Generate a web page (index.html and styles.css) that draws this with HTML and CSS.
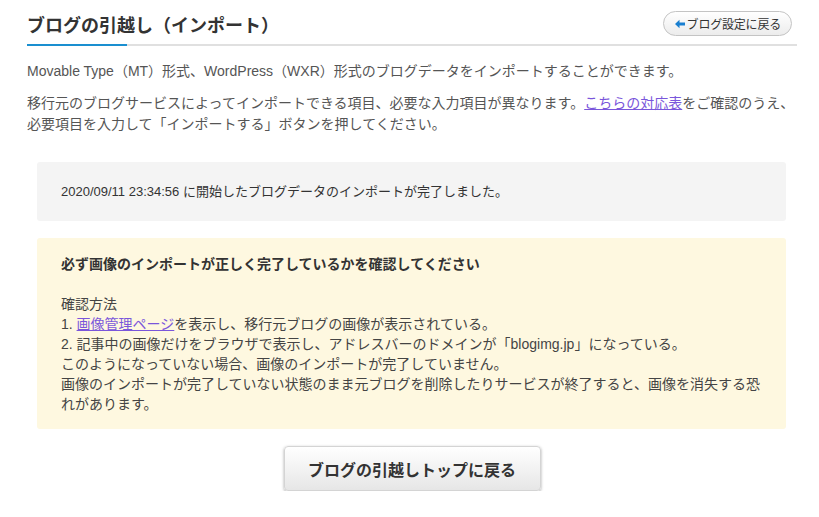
FILE: index.html
```html
<!DOCTYPE html>
<html lang="ja">
<head>
<meta charset="utf-8">
<title>ブログの引越し（インポート）</title>
<link rel="stylesheet" href="styles.css">
</head>
<body>
<div class="page">
  <div class="header">
    <h1 class="title">ブログの引越し（インポート）</h1>
    <a class="back-btn" href="#"><svg class="arrow" width="10" height="10" viewBox="0 0 10 10"><path d="M0 5 L4.5 0.8 V3.4 H10 V6.6 H4.5 V9.2 Z" fill="#1a7fd0"/></svg>ブログ設定に戻る</a>
  </div>
  <div class="bar"><span class="bar-accent"></span></div>

  <p class="lead first">Movable Type（MT）形式、WordPress（WXR）形式のブログデータをインポートすることができます。</p>
  <p class="lead">移行元のブログサービスによってインポートできる項目、必要な入力項目が異なります。<a href="#" class="link">こちらの対応表</a>をご確認のうえ、<br>必要項目を入力して「インポートする」ボタンを押してください。</p>

  <div class="status">2020/09/11 23:34:56 に開始したブログデータのインポートが完了しました。</div>

  <div class="notice">
    <div class="notice-title">必ず画像のインポートが正しく完了しているかを確認してください</div>
    <div class="notice-body">
      <br>
      確認方法<br>
      1. <a href="#" class="link">画像管理ページ</a>を表示し、移行元ブログの画像が表示されている。<br>
      2. 記事中の画像だけをブラウザで表示し、アドレスバーのドメインが「blogimg.jp」になっている。<br>
      このようになっていない場合、画像のインポートが完了していません。<br>
      画像のインポートが完了していない状態のまま元ブログを削除したりサービスが終了すると、画像を消失する恐<br>れがあります。
    </div>
  </div>

  <div class="actions">
    <a class="top-btn" href="#">ブログの引越しトップに戻る</a>
  </div>
</div>
</body>
</html>
```
FILE: styles.css
```css
html, body {
  margin: 0;
  padding: 0;
  background: #fff;
}
body {
  font-family: "Liberation Sans", "Noto Sans CJK JP", sans-serif;
  color: #333;
}
.page {
  width: 770px;
  margin-left: 27px;
}
.header {
  display: flex;
  justify-content: space-between;
  align-items: flex-start;
  padding-top: 10px;
  padding-bottom: 2px;
  height: 32px;
}
.title {
  margin: 0;
  font-size: 18px;
  line-height: 32px;
  font-weight: bold;
  color: #333;
}
.back-btn {
  margin-top: 1px;
  margin-right: 5px;
  display: flex;
  align-items: center;
  box-sizing: border-box;
  height: 25px;
  padding: 0 10px 0 11px;
  border: 1px solid #c4c4c4;
  border-radius: 13px;
  background: linear-gradient(#ffffff, #ececec);
  font-size: 12px;
  color: #333;
  text-decoration: none;
  letter-spacing: -0.2px;
}
.arrow {
  margin-right: 2px;
}
.bar {
  display: flex;
  height: 2px;
  background: #e0e0e0;
}
.bar-accent {
  width: 100px;
  background: #1a8fd0;
}
.lead {
  margin: 11px 0 0 0;
  font-size: 14px;
  line-height: 21px;
  color: #555;
  white-space: nowrap;
}
.lead.first {
  margin-top: 15px;
}
.link {
  color: #7a56db;
  text-decoration: underline;
}
.status {
  margin: 27px 11px 0 10px;
  padding: 20px 24px 19px 24px;
  background: #f4f4f4;
  border-radius: 3px;
  font-size: 13px;
  line-height: 20px;
  color: #333;
}
.notice {
  margin: 17px 11px 0 10px;
  padding: 16px 10px 15px 24px;
  background: #fef8e0;
  border-radius: 3px;
  font-size: 14px;
  line-height: 20px;
  color: #444;
  white-space: nowrap;
}
.notice-title {
  font-weight: bold;
  color: #333;
}
.actions {
  display: flex;
  justify-content: center;
  margin-top: 17px;
}
.top-btn {
  display: flex;
  align-items: center;
  justify-content: center;
  box-sizing: border-box;
  width: 257px;
  height: 45px;
  border: 1px solid #d4d4d4;
  border-radius: 4px;
  background: linear-gradient(#ffffff, #e6e6e6);
  box-shadow: 0 1px 3px rgba(0, 0, 0, 0.35);
  font-size: 16px;
  font-weight: bold;
  color: #333;
  text-decoration: none;
}
```
